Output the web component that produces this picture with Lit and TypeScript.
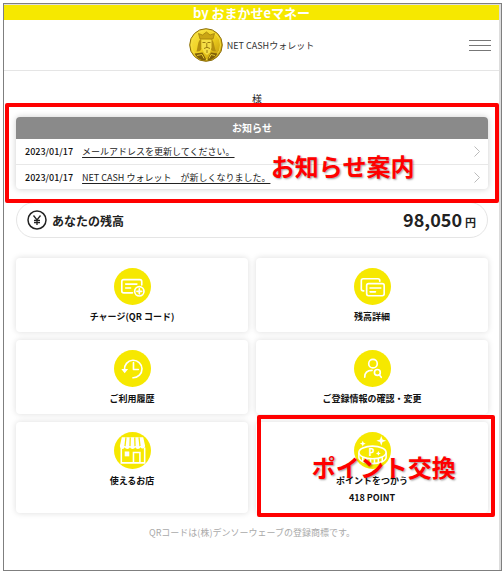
import { LitElement, html, css, svg, nothing } from "lit";
import { customElement, property } from "lit/decorators.js";

const icons = {
  charge: svg`<g fill="none" stroke="#fff" stroke-width="1.7" stroke-linecap="round" stroke-linejoin="round">
    <path d="M19 25.500H10a2 2 0 0 1-2-2v-9.500a2 2 0 0 1 2-2h16.500a2 2 0 0 1 2 2v3.500M12 16.500h11.500M12 20.500h5"/>
    <circle cx="26" cy="24" r="4.800"/><path d="M26 21.500v5M23.500 24h5"/></g>`,
  detail: svg`<g fill="none" stroke="#fff" stroke-width="1.700" stroke-linecap="round" stroke-linejoin="round">
    <path d="M10 23.500H9.500a2 2 0 0 1-2-2V13a2 2 0 0 1 2-2H24.500a2 2 0 0 1 2 2v.5"/>
    <rect x="13" y="16" width="18" height="12.500" rx="2"/><path d="M16.500 20.500h11M16.500 24.500h5.500"/></g>`,
  history: svg`<path d="M10.800 20.500A9 9 0 1 1 19.500 28.500M20 13v7h5" fill="none" stroke="#fff" stroke-width="1.700" stroke-linecap="round" stroke-linejoin="round"/>
    <path d="M7.500 19.500h7L11 24z" fill="#fff"/>`,
  profile: svg`<g fill="none" stroke="#fff" stroke-width="1.700" stroke-linecap="round">
    <circle cx="19.500" cy="14" r="4.400"/><path d="M11 28c0-4.800 3-7 7.500-7"/>
    <circle cx="24" cy="23" r="3"/><path d="M26 25.500l2 2.500"/></g>`,
  shop: svg`<path d="M8 5.500h22l2 9a2.600 2.600 0 0 1-4.800 1.200 2.900 2.900 0 0 1-5.400 0 2.900 2.900 0 0 1-5.400 0 2.900 2.900 0 0 1-5.400 0A2.600 2.600 0 0 1 6 14.500z" fill="#fff"/>
    <path d="M12.300 5.500l-1 9M16.700 5.500l-.300 9M21.300 5.500l.300 9M25.700 5.500l1 9" stroke="#f6e800" stroke-width="1.300"/>
    <path d="M7.500 16v15.700h24V16" fill="none" stroke="#fff" stroke-width="1.600"/>
    <rect x="11" y="20" width="4.700" height="5" fill="#fff"/>
    <path d="M20 31V21h6.600v10" fill="none" stroke="#fff" stroke-width="1.600"/>`,
  point: svg`<g fill="none" stroke="#fff" stroke-width="1.600">
    <ellipse cx="19" cy="21" rx="14" ry="6.500"/>
    <path d="M5 21v5c0 3.600 6.300 6.500 14 6.500s14-2.900 14-6.500v-5"/>
    <path d="M9 26v4M13 27.500v4M17 28v4M21 28v4M25 27.500v4M29 26v4"/></g>
    <text class="coin" x="15" y="24.500">P</text>
    <path d="M25 19.500l.8 1.700 1.700.8-1.700.8-.8 1.700-.8-1.700-1.700-.8 1.700-.8zM28 4l1.300 3.700L33 9l-3.700 1.300L28 14l-1.300-3.700L23 9l3.700-1.300zM9 9l.9 2.100L12 12l-2.100.9L9 15l-.9-2.100L6 12l2.100-.9z" fill="#fff"/>`,
};

type IconName = keyof typeof icons;

@customElement("menu-card")
class MenuCard extends LitElement {
  @property() icon: IconName = "charge";
  @property() label = "";
  @property() detail = "";

  static styles = css`
    :host { display: grid; }
    .card {
      display: flex; flex-direction: column; align-items: center;
      padding: 10px 4px 7px; border: 0; border-radius: 4px;
      background: #fff; color: #111; box-shadow: 0 0 6px rgba(0, 0, 0, 0.14);
      font: 700 9px/17px "Noto Sans CJK JP", sans-serif; cursor: pointer;
    }
    .icon { width: 37px; height: 37px; display: block; margin-bottom: 3px; }
    .coin { font: 700 10px "Open Sans", sans-serif; fill: #fff; }
  `;

  render() {
    return html`<button class="card" type="button">
      <svg class="icon" viewBox="0 0 38 38" aria-hidden="true">
        <circle cx="19" cy="19" r="19" fill="#f6e800"/>${icons[this.icon]}
      </svg>
      <span>${this.label}</span>
      ${this.detail ? html`<span>${this.detail}</span>` : nothing}
    </button>`;
  }
}

@customElement("app-root")
class AppRoot extends LitElement {
  static styles = css`
    * { box-sizing: border-box; }
    :host {
      display: block; padding: 3px 2px 3px 3px; background: #fff; color: #222;
      font-family: "Noto Sans CJK JP", sans-serif; font-size: 9px;
    }
    .frame { border: 1px solid #7f7f7f; }
    .page { border-top: 1px solid #ddd; border-right: 2px solid #ddd; }
    .banner {
      height: 15px; background: #f6e800; color: #fff; text-align: center;
      font-size: 13px; line-height: 15px; font-weight: 700;
    }
    .header {
      display: grid; grid-template-columns: 1fr auto 1fr; align-items: center;
      height: 51px; padding: 0 8px; border-bottom: 1px solid #e5e5e5;
    }
    .brand {
      grid-column: 2; display: flex; align-items: center; gap: 4px;
      color: #333; text-decoration: none;
    }
    .logo { width: 34px; height: 34px; }
    .menu {
      justify-self: end; width: 22px; height: 11px; padding: 0; border: 0;
      background: none; display: flex; flex-direction: column; justify-content: space-between;
    }
    .bar { height: 1px; width: 100%; background: #777; }
    .content { padding: 20px 11px 29px 12px; }
    .name { margin: 0; padding-bottom: 10px; text-align: center; font-size: 10px; line-height: 16px; }
    .notice { position: relative; margin-bottom: 13px; }
    .notice-card { border-radius: 4px; background: #fff; box-shadow: 0 0 6px rgba(0, 0, 0, 0.2); overflow: hidden; }
    .notice-title {
      margin: 0; background: #8a8a8a; color: #fff; text-align: center;
      font-size: 10px; line-height: 22px; font-weight: 700;
    }
    .news { list-style: none; margin: 0; padding: 0; }
    .item {
      display: flex; align-items: center; gap: 9px; height: 25px; padding: 0 8px 0 9px;
    }
    .item + .item { border-top: 1px solid #e8e8e8; }
    .item a { flex: 1; color: #222; text-underline-offset: 2px; }
    .date { color: #111; font-weight: 500; }
    .chevron { width: 6px; height: 11px; }
    .mark { position: absolute; z-index: 2; border: 4px solid #f00; border-radius: 2px; pointer-events: none; }
    .mark-notice { inset: -14px -11px; }
    .mark-point { inset: -7px -7px -4px 1px; }
    .note {
      position: absolute; z-index: 3; color: #f00; white-space: nowrap; pointer-events: none;
      font-size: 24px; line-height: 32px; font-weight: 700;
      text-shadow: 1px 1px 2px rgba(0, 0, 0, 0.4);
    }
    .note-notice { top: 33px; left: 54%; }
    .note-point { top: 29px; left: 24%; }
    .balance {
      display: flex; align-items: center; gap: 5px; height: 36px; padding: 0 11px 0 10px;
      border: 1px solid #e5e5e5; border-radius: 18px; margin-bottom: 20px;
      font-size: 12px; font-weight: 700;
    }
    .yen { width: 20px; height: 20px; }
    .amount { margin-left: auto; display: flex; align-items: baseline; gap: 3px; line-height: 24px; }
    .number { font-size: 18px; }
    .unit { font-size: 11px; }
    .cards { display: grid; grid-template-columns: 1fr 1fr; gap: 8px; }
    .point { position: relative; display: grid; }
    .legal { margin: 0; padding-top: 12px; text-align: center; color: #aaa; line-height: 16px; }
  `;

  item(date: string, text: string) {
    return html`<li class="item">
      <time class="date">${date}</time><a href="#">${text}</a>
      <svg class="chevron" viewBox="0 0 6 11" aria-hidden="true"><path d="M.5.500l5 5-5 5" fill="none" stroke="#bbb"/></svg>
    </li>`;
  }

  logo() {
    return html`<svg class="logo" viewBox="0 0 34 34" aria-hidden="true">
      <defs><linearGradient id="gold" x1="0" y1="0" x2="1" y2="1">
        <stop offset="0" stop-color="#f8e44c"/><stop offset=".5" stop-color="#efd01f"/><stop offset="1" stop-color="#b98d08"/>
      </linearGradient></defs>
      <circle cx="17" cy="17" r="16.300" fill="url(#gold)" stroke="#8a6d0c"/>
      <circle cx="17" cy="17" r="14.500" fill="none" stroke="#f7e245" stroke-width=".8"/>
      <path d="M9.500 5.500l4 1.500L17.500 4l3.500 3 4.500-1.500L24 11H11z" fill="#caa514" stroke="#9b7a0c" stroke-width=".7"/>
      <path d="M11.500 11c-3 3-2.500 8-4 12.500 3 .5 5-1 5-4V12zM22.500 11c3 3 2.500 8 4.500 12-3 1-5.500-.5-5.500-3.500V12z" fill="#b48f10"/>
      <path d="M12.500 12h10v7.500l-1.500 5-3 2.500-3-2.500-2.500-5z" fill="#f5de45"/>
      <path d="M13.500 14.500h3M18.500 14.500h3M17.800 15v4M15 20.500l3-1.200 3 1.200M18 22v3" fill="none" stroke="#92710b" stroke-width=".9"/>
      <path d="M5.500 25.500l8-1 3.500 6.500-.5 1.500C11 32.300 7.500 29.500 5.500 25.500zM28.500 25.500l-6.500-1L18.500 31l.5 1.500c4-.5 7.500-3.300 9.500-7z" fill="#7f5f08"/>
      <path d="M8 27.500l5-1 2 4M26 27.500l-4-1-2 4" fill="none" stroke="#e5c72c"/>
    </svg>`;
  }

  render() {
    return html`<div class="frame"><div class="page">
      <div class="banner">by おまかせeマネー</div>
      <header class="header">
        <a class="brand" href="#">${this.logo()}<span>NET CASHウォレット</span></a>
        <button class="menu" type="button" aria-label="メニュー">
          <span class="bar"></span><span class="bar"></span><span class="bar"></span>
        </button>
      </header>
      <main class="content">
        <p class="name">　様</p>
        <section class="notice">
          <div class="notice-card">
            <h2 class="notice-title">お知らせ</h2>
            <ul class="news">
              ${this.item("2023/01/17", "メールアドレスを更新してください。")}
              ${this.item("2023/01/17", "NET CASH ウォレット　が新しくなりました。")}
            </ul>
          </div>
          <div class="mark mark-notice"></div>
          <span class="note note-notice">お知らせ案内</span>
        </section>
        <section class="balance">
          <svg class="yen" viewBox="0 0 20 20" fill="none" stroke="#222" aria-hidden="true">
            <circle cx="10" cy="10" r="9" stroke-width="1.500"/>
            <path d="M6.500 5.500L10 10l3.500-4.500M10 10v5M7 10.500h6M7 12.700h6" stroke-width="1.300"/>
          </svg>
          <span>あなたの残高</span>
          <span class="amount"><span class="number">98,050</span><span class="unit">円</span></span>
        </section>
        <nav class="cards">
          <menu-card icon="charge" label="チャージ(QR コード)"></menu-card>
          <menu-card icon="detail" label="残高詳細"></menu-card>
          <menu-card icon="history" label="ご利用履歴"></menu-card>
          <menu-card icon="profile" label="ご登録情報の確認・変更"></menu-card>
          <menu-card icon="shop" label="使えるお店"></menu-card>
          <div class="point">
            <menu-card icon="point" label="ポイントをつかう" detail="418 POINT"></menu-card>
            <div class="mark mark-point"></div>
            <span class="note note-point">ポイント交換</span>
          </div>
        </nav>
        <p class="legal">QRコードは(株)デンソーウェーブの登録商標です。</p>
      </main>
    </div></div>`;
  }
}
